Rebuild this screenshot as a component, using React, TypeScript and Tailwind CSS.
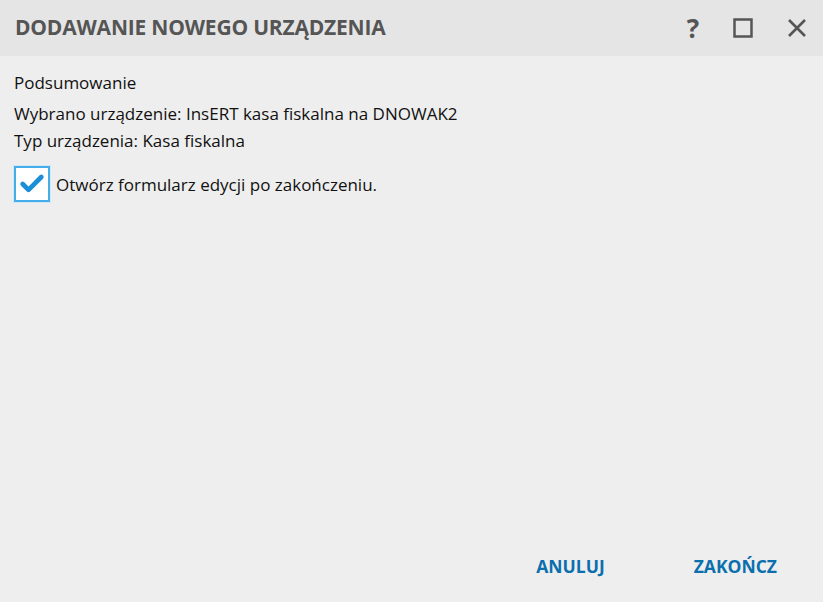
import { Check } from 'lucide-react'

export default function App() {
  return (
    <div className="w-[823px] h-[602px] flex flex-col bg-[#eeeeee] font-['Open_Sans',sans-serif] text-[#111]">
      {/* Title bar */}
      <div className="h-[56px] shrink-0 flex items-center bg-[#e5e5e5] pl-[15px] pr-[16px]">
        <h1 className="flex-1 text-[21px] font-bold text-[#555] tracking-[-0.2px]">
          DODAWANIE NOWEGO URZĄDZENIA
        </h1>
        <div className="flex items-center text-[#555]">
          <span className="w-[20px] text-center text-[26px] font-bold leading-none">?</span>
          <svg width="20" height="20" viewBox="0 0 20 20" className="ml-[30px]">
            <rect x="1.5" y="1.5" width="17" height="17" fill="none" stroke="currentColor" strokeWidth="2.5" />
          </svg>
          <svg width="20" height="20" viewBox="0 0 20 20" className="ml-[34px]">
            <path d="M2 2 L18 18 M18 2 L2 18" stroke="currentColor" strokeWidth="2.6" />
          </svg>
        </div>
      </div>

      {/* Body */}
      <div className="flex-1 flex flex-col px-[14px] pt-[13px] text-[17px] leading-[27px]">
        <p>Podsumowanie</p>
        <p className="mt-[4px]">Wybrano urządzenie: InsERT kasa fiskalna na DNOWAK2</p>
        <p>Typ urządzenia: Kasa fiskalna</p>
        <label className="mt-[12px] flex items-center gap-[6px]">
          <span className="w-[36px] h-[36px] flex items-center justify-center bg-white border-2 border-[#45aee8] shadow-[0_0_0_1px_#cfe8f7]">
            <Check size={28} strokeWidth={4} className="text-[#1a8fd8]" />
          </span>
          <span>Otwórz formularz edycji po zakończeniu.</span>
        </label>
      </div>

      {/* Footer */}
      <div className="h-[72px] shrink-0 flex items-start justify-end gap-[89px] pr-[46px] pt-[23px] text-[17.5px] font-bold text-[#0b6fae]">
        <button>ANULUJ</button>
        <button>ZAKOŃCZ</button>
      </div>
    </div>
  )
}
